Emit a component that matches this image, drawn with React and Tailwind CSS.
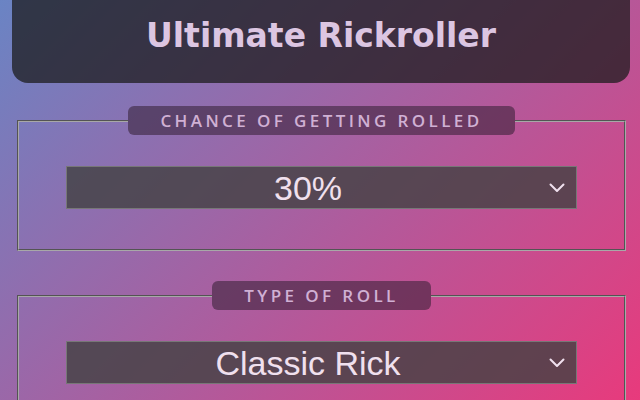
import React from "react";

const Chevron = () => (
  <svg width="16" height="10" viewBox="0 0 16 10" fill="none" className="text-[#f0e0ee]">
    <polyline points="1.5,1.5 8,8 14.5,1.5" stroke="currentColor" strokeWidth="2" strokeLinecap="round" strokeLinejoin="round" />
  </svg>
);

const Picker = ({ legend, value }) => (
  <fieldset className="ml-[5px] mr-[4px] border-2 [border-style:groove] border-[#a8a8a8] px-[47px] pt-[31px] pb-[40px]">
    <legend className="mx-auto rounded-md bg-[rgba(50,30,50,0.55)] px-[32px] py-[5px] text-[17px] font-semibold leading-[19px] tracking-[3.4px] text-[#d0b0d4] font-['Open_Sans',sans-serif]">
      {legend}
    </legend>
    <div className="flex h-[43px] items-center border border-[#777] bg-[rgba(65,65,65,0.8)]">
      <div className="flex-1 text-center text-[34px] leading-none text-[#f0e0ee] font-['Liberation_Sans',Arial,sans-serif]">
        {value}
      </div>
      <div className="flex w-[27px] items-center justify-start">
        <Chevron />
      </div>
    </div>
  </fieldset>
);

export default function App() {
  return (
    <div className="h-screen overflow-hidden bg-[linear-gradient(135deg,#6a84c4,#e83a7c)] pl-[12px] pr-[10px]">
      <header className="h-[83px] rounded-b-2xl bg-[rgba(26,26,26,0.73)] pt-[16px]">
        <h1 className="text-center text-[33px] font-bold leading-[40px] text-[#dcc6e2] font-['DejaVu_Sans',Verdana,sans-serif]">
          Ultimate Rickroller
        </h1>
      </header>
      <div className="mt-[23px] flex flex-col gap-[30px]">
        <Picker legend="CHANCE OF GETTING ROLLED" value="30%" />
        <Picker legend="TYPE OF ROLL" value="Classic Rick" />
      </div>
    </div>
  );
}
